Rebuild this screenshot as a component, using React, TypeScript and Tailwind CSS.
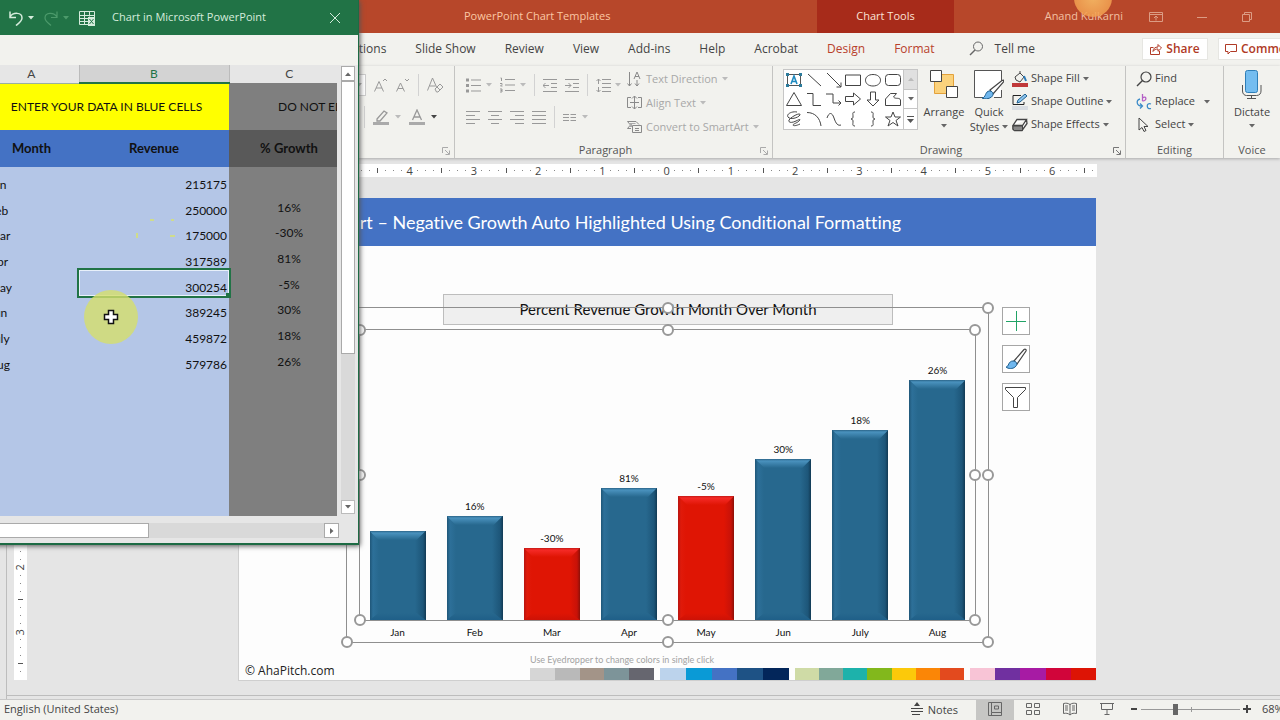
import type { ReactNode } from 'react';

type MonthRow = { month: string; revenue: number; growth: string };

const rows: MonthRow[] = [
  { month: 'Jan', revenue: 215175, growth: '' },
  { month: 'Feb', revenue: 250000, growth: '16%' },
  { month: 'Mar', revenue: 175000, growth: '-30%' },
  { month: 'Apr', revenue: 317589, growth: '81%' },
  { month: 'May', revenue: 300254, growth: '-5%' },
  { month: 'Jun', revenue: 389245, growth: '30%' },
  { month: 'July', revenue: 459872, growth: '18%' },
  { month: 'Aug', revenue: 579786, growth: '26%' },
];

const UNITS_PER_PIXEL = 2415;

function Caret({ className = 'text-[#666]' }: { className?: string }) {
  return (
    <svg width="6" height="4" viewBox="0 0 6 4" className={`shrink-0 ${className}`} aria-hidden="true">
      <path d="M0 0h6L3 3.5z" fill="currentColor" />
    </svg>
  );
}

function Icon({ w = 16, h = 16, children }: { w?: number; h?: number; children: ReactNode }) {
  return (
    <svg
      width={w}
      height={h}
      viewBox={`0 0 ${w} ${h}`}
      fill="none"
      stroke="currentColor"
      className="shrink-0"
      aria-hidden="true"
    >
      {children}
    </svg>
  );
}

function Separator() {
  return <span className="h-[22px] w-px bg-[#d2d2d2]" />;
}

function Launcher({ className }: { className: string }) {
  return (
    <svg width="8" height="8" viewBox="0 0 8 8" fill="none" stroke="currentColor" className={className} aria-hidden="true">
      <path d="M.5 6V.5H6M3 3l4 4M7.500 3.500v4h-4" />
    </svg>
  );
}

/* ---------- PowerPoint title bar and tabs ---------- */

function TitleBar() {
  return (
    <header className="flex h-[33px] shrink-0 overflow-hidden bg-[#b7472a] text-[11px]">
      <div className="flex w-[817px] shrink-0 items-center pl-[464px] text-[#fbc7a4]">PowerPoint Chart Templates</div>
      <div className="flex w-[137px] shrink-0 items-center justify-center bg-[#a72b1a] text-[#fbe3d6]">Chart Tools</div>
      <div className="flex flex-1 items-center justify-end text-[#f2c0a2]">
        <span className="mr-[26px] whitespace-nowrap">Anand Kulkarni</span>
        <div className="flex items-center gap-[33px] pr-[27px] text-[#dc9c84]">
          <button aria-label="Ribbon display options">
            <Icon w={14} h={12}>
              <path d="M.5 1.500h13v9H.5zM.5 3.500h13M7 9.500V5M5 7l2-2 2 2" />
            </Icon>
          </button>
          <button aria-label="Minimize">
            <Icon w={12} h={12}>
              <path d="M1 6.500h10" />
            </Icon>
          </button>
          <button aria-label="Restore">
            <Icon w={12} h={12}>
              <path d="M1.500 3.500h7v7h-7zM3.500 3.500v-2h7v7h-2" />
            </Icon>
          </button>
        </div>
      </div>
    </header>
  );
}

function Tabs() {
  return (
    <nav className="flex h-[33px] shrink-0 items-center overflow-hidden whitespace-nowrap bg-[#f2f2ee] pb-[2px] pl-[323px] text-[12px] text-[#444]">
      <div className="flex gap-[29px]">
        <button>Animations</button>
        <button>Slide Show</button>
        <button>Review</button>
        <button>View</button>
        <button>Add-ins</button>
        <button>Help</button>
        <button>Acrobat</button>
        <button className="text-[#b8402c]">Design</button>
        <button className="text-[#b8402c]">Format</button>
      </div>
      <button className="ml-[34px] flex items-center gap-[11px]">
        <Icon w={15} h={15}>
          <circle cx="9" cy="5.500" r="4.500" stroke="#666" />
          <path d="M6 9l-5 5" stroke="#666" strokeWidth="1.500" />
        </Icon>
        Tell me
      </button>
      <div className="ml-auto flex shrink-0 gap-[10px] font-semibold text-[#b03a26]">
        <button className="flex h-[22px] w-[66px] items-center justify-center gap-[4px] border border-[#e6e6e2] bg-white">
          <Icon w={12} h={12}>
            <path d="M3.500 4.500h-3v7h9V8M3 8.500c0-3 2-4.500 5-4.500V1.500L11.500 5 8 8.300V6C6 6 4 6.500 3 8.500z" />
          </Icon>
          Share
        </button>
        <div className="w-[62px] overflow-hidden">
          <button className="flex h-[22px] w-[100px] items-center gap-[4px] border border-[#e6e6e2] bg-white pl-[6px]">
            <Icon w={12} h={12}>
              <path d="M.5 1.500h11v7h-6L3 11V8.500H.5z" />
            </Icon>
            Comments
          </button>
        </div>
      </div>
    </nav>
  );
}

/* ---------- Ribbon ---------- */

function Group({ className, label, children }: { className: string; label: ReactNode; children: ReactNode }) {
  return (
    <section className={`flex shrink-0 flex-col border-r border-[#c4c4c2] ${className}`}>
      <div className="flex h-[77px]">{children}</div>
      <div className="relative h-[14px] text-center text-[11px] leading-[14px] text-[#555]">{label}</div>
    </section>
  );
}

function FontGroup() {
  return (
    <Group className="w-[455px]" label={<Launcher className="absolute right-[4px] bottom-[2px] text-[#aaa]" />}>
      <div className="ml-auto flex flex-col gap-[10px] pt-[8px] pr-[10px] text-[#999]">
        <div className="flex h-[22px] items-center justify-end gap-[8px]">
          <span className="flex h-[22px] w-[16px] items-center justify-end border border-[#ccc] bg-white pr-[3px]">
            <Caret className="text-[#aaa]" />
          </span>
          <button aria-label="Increase font size">
            <Icon w={14} h={14}>
              <path d="M.5 13.500L5 3.500l4.500 10M2 10h6M9 3l2-2 2 2" />
            </Icon>
          </button>
          <button aria-label="Decrease font size">
            <Icon w={14} h={14}>
              <path d="M.5 13.500L4.500 5l4 8.500M2 10.500h5M9 1l2 2 2-2" />
            </Icon>
          </button>
          <Separator />
          <button aria-label="Clear formatting">
            <Icon w={17} h={16}>
              <path d="M.5 13.500L5.500 1l4 9M2.500 9h6M8 12l5-5 3 3-5 5H9.500zM10 10l3 3" />
            </Icon>
          </button>
        </div>
        <div className="flex h-[22px] items-center gap-[8px] pr-[2px]">
          <Caret className="text-[#bbb]" />
          <Separator />
          <button aria-label="Highlight" className="flex items-center gap-[6px]">
            <Icon w={16} h={16}>
              <path d="M4 10l7-8 3 2-7 8H4z" strokeWidth="1.300" />
              <path d="M0 14.500h16" strokeWidth="3" stroke="#aaa" />
            </Icon>
            <Caret className="text-[#bbb]" />
          </button>
          <button aria-label="Font color" className="flex items-center gap-[6px]">
            <Icon w={16} h={16}>
              <path d="M3.500 11L8 1l4.500 10M5 8h6" strokeWidth="1.300" />
              <path d="M0 14.500h16" strokeWidth="3" stroke="#aaa" />
            </Icon>
            <Caret className="text-[#444]" />
          </button>
        </div>
      </div>
    </Group>
  );
}

const alignments = [
  { name: 'Align left', d: 'M0 1.500h14M0 5.500h9M0 9.500h14M0 13.500h9' },
  { name: 'Center', d: 'M0 1.500h14M3 5.500h8M0 9.500h14M3 13.500h8' },
  { name: 'Align right', d: 'M0 1.500h14M5 5.500h9M0 9.500h14M5 13.500h9' },
  { name: 'Justify', d: 'M0 1.500h14M0 5.500h14M0 9.500h14M0 13.500h14' },
];

function ParagraphGroup() {
  return (
    <Group
      className="w-[318px]"
      label={
        <>
          <span className="pr-[16px]">Paragraph</span>
          <Launcher className="absolute right-[4px] bottom-[2px] text-[#aaa]" />
        </>
      }
    >
      <div className="flex w-[172px] flex-col gap-[10px] pt-[8px] pl-[11px] text-[#999]">
        <div className="flex h-[22px] items-center gap-[8px]">
          <button aria-label="Bullets" className="flex items-center gap-[5px]">
            <Icon w={15} h={15}>
              <path d="M5 2h10M5 7.500h10M5 13h10" />
              <path d="M0 2h3M0 7.500h3M0 13h3" strokeWidth="3" />
            </Icon>
            <Caret className="text-[#bbb]" />
          </button>
          <button aria-label="Numbering" className="flex items-center gap-[5px]">
            <Icon w={15} h={16}>
              <path d="M5 2.500h10M5 8h10M5 13.500h10" />
              <path d="M.5 1h1v3M0 6.500h2v1L.5 9H2.500M0 12h2v3H0M.5 13.500H2" />
            </Icon>
            <Caret className="text-[#bbb]" />
          </button>
          <Separator />
          <button aria-label="Decrease indent">
            <Icon w={14} h={15}>
              <path d="M0 1.500h14M8 5.500h6M8 9.500h6M0 13.500h14M6 7.500H0M2.500 5L0 7.500 2.500 10" />
            </Icon>
          </button>
          <button aria-label="Increase indent">
            <Icon w={14} h={15}>
              <path d="M0 1.500h14M8 5.500h6M8 9.500h6M0 13.500h14M0 7.500h6M3.500 5L6 7.500 3.500 10" />
            </Icon>
          </button>
          <Separator />
          <button aria-label="Line spacing" className="flex items-center gap-[4px]">
            <Icon w={15} h={15}>
              <path d="M6 1.500h9M6 5.500h9M6 9.500h9M6 13.500h9M2.500 1v5M.5 3l2-2 2 2M2.500 9v5M.5 12l2 2 2-2" />
            </Icon>
            <Caret className="text-[#bbb]" />
          </button>
        </div>
        <div className="flex h-[22px] items-center gap-[8px]">
          {alignments.map((item) => (
            <button key={item.name} aria-label={item.name}>
              <Icon w={14} h={15}>
                <path d={item.d} />
              </Icon>
            </button>
          ))}
          <Separator />
          <button aria-label="Columns" className="flex items-center gap-[6px]">
            <Icon w={13} h={9}>
              <path d="M0 1.500h6M0 4.500h6M0 7.500h6M7.500 1.500H13M7.500 4.500H13M7.500 7.500H13" />
            </Icon>
            <Caret className="text-[#bbb]" />
          </button>
        </div>
      </div>
      <div className="flex flex-col pt-px text-[11px] text-[#a8a8a8]">
        <button className="flex h-6 items-center gap-[4px]">
          <Icon w={15} h={16}>
            <path d="M2.500 1v14M.5 12.500l2 2.500 2-2.500M10 9v6M8 12.500l2 2.500 2-2.500M7 8l3-7 3 7M8 5.500h4" stroke="#8a8a8a" />
          </Icon>
          Text Direction
          <Caret className="text-[#bbb]" />
        </button>
        <button className="flex h-6 items-center gap-[4px]">
          <Icon w={15} h={16}>
            <path d="M4 2.500H.5v10H4M11 2.500h3.500v10H11M7.500 1v13M5 3.500L7.500 1 10 3.500M5 11.500L7.500 14 10 11.500M3 7.500h9" stroke="#8a8a8a" />
          </Icon>
          Align Text
          <Caret className="text-[#bbb]" />
        </button>
        <button className="flex h-6 items-center gap-[4px]">
          <Icon w={15} h={14}>
            <path d="M.5 1.500H9l3 3M.5 1.500l3 3.500-3 3.500H4M5.500 5.500h9v7h-9zM8 8.500h4M8 10.500h4" stroke="#8a8a8a" />
            <path d="M2 3h6l1 1H5v3H2l2-2z" fill="#aaa" stroke="none" />
          </Icon>
          Convert to SmartArt
          <Caret className="text-[#bbb]" />
        </button>
      </div>
    </Group>
  );
}

const shapes = [
  { name: 'Line', d: 'M2 2l13 12' },
  { name: 'Arrow', d: 'M1 1l14 14M15 10.500V15h-4.500' },
  { name: 'Rectangle', d: 'M.5 3h15v10.500H.5z' },
  { name: 'Oval', d: 'M8 2.500c10 0 10 11.500 0 11.500S-2 2.500 8 2.500z' },
  { name: 'Rounded rectangle', d: 'M3.500 2.500h9a3 3 0 013 3v5a3 3 0 01-3 3h-9a3 3 0 01-3-3v-5a3 3 0 013-3z' },
  { name: 'Triangle', d: 'M8 1.500l7.500 13H.5z' },
  { name: 'Elbow connector', d: 'M1 2.500h6v12h8' },
  { name: 'Elbow arrow', d: 'M0 3h7v9h8M12.500 9.500L15 12l-2.500 2.500' },
  { name: 'Right arrow', d: 'M.5 5.500h8V2l7 6-7 6v-3.500h-8z' },
  { name: 'Down arrow', d: 'M5.500 1h5v8H14l-6 6-6-6h3.500z' },
  { name: 'Freeform', d: 'M.5 14.500V8l5-5.500h6L8.500 6c2 2.500 6 0 7 3v5.500z' },
  { name: 'Scribble', d: 'M11 1C6 0 0 3 2 6s10 1 12-2c1-3-8 1-11 5-1 3 3 3 7 1s5-2 3 0-6 3-6 4 3 1 7-1' },
  { name: 'Curve', d: 'M1 1.500C9 1.500 14 7 15 15' },
  { name: 'Wave', d: 'M1 7c2-6 5-6 7 0s4 8 7 7' },
  { name: 'Left brace', d: 'M10 1C7 1 8 3 8 5s0 2.500-2 3c2 .5 2 1 2 3s-1 4 2 4' },
  { name: 'Right brace', d: 'M6 1c3 0 2 2 2 4s0 2.500 2 3c-2 .5-2 1-2 3s1 4-2 4' },
  { name: 'Star', d: 'M8 1l2 5h5.500L11 9.500l2 5.500-5-3.500L3 15l2-5.500L.5 6H6z' },
];

function ShapeGallery() {
  return (
    <div className="flex h-[61px] w-[135px] border border-[#c6c6c6] bg-white">
      <div className="grid flex-1 grid-cols-6 place-items-center text-[#444]">
        <button aria-label="Text box">
          <Icon>
            <path d="M1.500 2.500h13v11h-13z" stroke="#555" />
            <path d="M5 12l3-8 3 8M6 9.500h4" stroke="#1f8ac0" strokeWidth="1.600" />
            <path d="M0 2.500h3M13 2.500h3M0 13.500h3M13 13.500h3" stroke="#2b7b9c" strokeWidth="3" />
          </Icon>
        </button>
        {shapes.map((shape) => (
          <button key={shape.name} aria-label={shape.name}>
            <Icon>
              <path d={shape.d} />
            </Icon>
          </button>
        ))}
      </div>
      <div className="grid w-[14px] grid-rows-3 divide-y divide-[#c6c6c6] border-l border-[#c6c6c6] text-[#555]">
        <button aria-label="Scroll up" className="grid place-items-center bg-[#e0e0e0]">
          <Caret className="rotate-180 text-[#bbb]" />
        </button>
        <button aria-label="Scroll down" className="grid place-items-center">
          <Caret />
        </button>
        <button aria-label="More shapes" className="grid place-items-center">
          <Icon w={7} h={7}>
            <path d="M0 .5h7" />
            <path d="M0 3h7L3.500 7z" fill="currentColor" stroke="none" />
          </Icon>
        </button>
      </div>
    </div>
  );
}

function Brush({ w, h }: { w: number; h: number }) {
  return (
    <svg width={w} height={h} viewBox="0 0 22 22" fill="none" aria-hidden="true">
      <path d="M9 13L19 1.500c1.500-1 2.500.5 2 1.500L12 16z" fill="#fff" stroke="#444" strokeWidth="1.200" />
      <path d="M1 19c3 0 2-6 7-6 4 0 5 4 2 6-2 2-7 2-9 0z" fill="#6fb7ee" stroke="#1f5f8f" />
    </svg>
  );
}

function DrawingGroup() {
  return (
    <Group
      className="w-[353px]"
      label={
        <>
          <span className="pr-[16px]">Drawing</span>
          <Launcher className="absolute right-[4px] bottom-[2px] text-[#777]" />
        </>
      }
    >
      <div className="flex w-full gap-[4px] pt-[3px] pl-[10px] text-[11px] text-[#444]">
        <ShapeGallery />
        <button className="flex w-[44px] flex-col items-center leading-[14px]">
          <svg width="28" height="29" viewBox="0 0 28 29" fill="none" aria-hidden="true">
            <path d="M4.500 5.500h19v19h-19z" fill="#fbd27c" stroke="#e3a13a" />
            <path d="M.5 1.500h11v11H.5zM16.500 17.500h11v11h-11z" fill="#fff" stroke="#444" />
          </svg>
          <span className="mt-[7px]">Arrange</span>
          <span className="mt-[5px]">
            <Caret />
          </span>
        </button>
        <button className="flex w-[38px] flex-col items-center leading-[15px]">
          <svg width="30" height="30" viewBox="0 0 30 30" fill="none" aria-hidden="true">
            <path d="M27.500 12V1.500H.5v27h9M27.500 21v7.500H20" stroke="#555" />
            <path d="M1 2h26v26H1z" fill="#fff" />
            <path d="M16 21L28 11.500c2-1 2 0 1.500 1.500L19 25z" fill="#fff" stroke="#444" strokeWidth="1.200" />
            <path d="M8 29c4 0 3-7 7.500-7 4 0 4.500 4 2 6s-7 2.500-9.500 1z" fill="#6fb7ee" stroke="#1f5f8f" />
          </svg>
          <span className="mt-[5px]">Quick</span>
          <span className="flex items-center gap-[3px]">
            Styles
            <Caret />
          </span>
        </button>
        <div className="flex flex-col whitespace-nowrap">
          <button className="flex h-[23px] items-center gap-[3px] pb-[4px]">
            <Icon w={16} h={16}>
              <path d="M3 6l5-4 4 4-4 5-4-2zM8 2V0" />
              <path d="M12 5l2 5" stroke="#2b7bb9" strokeWidth="2" />
              <path d="M0 14h16" stroke="#c0393a" strokeWidth="4" />
            </Icon>
            Shape Fill
            <Caret />
          </button>
          <button className="flex h-[23px] items-center gap-[3px] pb-[4px]">
            <Icon w={16} h={16}>
              <path d="M9 1.500H1v9h11V8" stroke="#222" />
              <path d="M5 9l1-3 7-6 2 2-7 6z" fill="#8cc4ee" stroke="#1f5f8f" />
              <path d="M0 14h16" stroke="#d9dde2" strokeWidth="4" />
            </Icon>
            Shape Outline
            <Caret />
          </button>
          <button className="flex h-[23px] items-center gap-[3px] pb-[4px]">
            <Icon w={16} h={14}>
              <path d="M5 1.500h9.500l-4 6H1zM1 7.500v4l1.500 1H10l5-7-.5-4" fill="#fff" strokeWidth="1.300" />
              <path d="M1 8h9.500v4.500h-8L1 11z" fill="#888" />
            </Icon>
            Shape Effects
            <Caret />
          </button>
        </div>
      </div>
    </Group>
  );
}

function EditingGroup() {
  return (
    <Group className="w-[98px]" label="Editing">
      <div className="flex flex-col pt-[3px] pl-[10px] text-[11px] text-[#444]">
        <button className="flex h-[23px] items-center gap-[3px] pb-[4px]">
          <Icon w={16} h={16}>
            <circle cx="10" cy="6" r="5" strokeWidth="1.200" />
            <path d="M6.500 9.500L1 15" strokeWidth="1.500" />
          </Icon>
          Find
        </button>
        <button className="flex h-[23px] items-center gap-[3px] pb-[4px]">
          <Icon w={16} h={16}>
            <path d="M6.500 0v7M6.500 4c4-3 5 3 0 3" stroke="#b45fc6" strokeWidth="1.300" />
            <path d="M15 10c-5-2-5 6 0 4.500M4 5C0 6 0 12 6 12M4 9.500L6.500 12 4 14.500" stroke="#3b8bc8" strokeWidth="1.300" />
          </Icon>
          Replace
          <span className="ml-[6px]">
            <Caret />
          </span>
        </button>
        <button className="flex h-[23px] items-center gap-[3px] pb-[4px]">
          <Icon w={16} h={16}>
            <path d="M3 1v12l3-2.500 2 4 2-1-2-4h4z" />
          </Icon>
          Select
          <Caret />
        </button>
      </div>
    </Group>
  );
}

function Ribbon() {
  return (
    <div className="z-10 flex h-[92px] shrink-0 overflow-hidden bg-[#f2f2ee] shadow-[0_1px_3px_#aaa]">
      <FontGroup />
      <ParagraphGroup />
      <DrawingGroup />
      <EditingGroup />
      <Group className="w-[56px] border-r-0" label="Voice">
        <button className="flex w-full flex-col items-center pt-[4px] text-[11px] leading-[14px] text-[#444]">
          <svg width="20" height="29" viewBox="0 0 20 29" fill="none" aria-hidden="true">
            <rect x="3.500" y=".5" width="12" height="22" rx="2" fill="#74bdf0" stroke="#2f7fb8" />
            <path d="M.5 15v6c0 3 2 4.500 4 4.500h10c3 0 4.500-2 4.500-4.500v-6M9.500 25.500v3M5 28.500h9" stroke="#555" />
          </svg>
          <span className="mt-[6px]">Dictate</span>
          <span className="mt-[5px]">
            <Caret />
          </span>
        </button>
      </Group>
    </div>
  );
}

/* ---------- Rulers ---------- */

function marks(reach: number) {
  return Array.from({ length: reach * 2 + 1 }, (_, i) => i - reach);
}

function Mark({ eighth, vertical = false }: { eighth: number; vertical?: boolean }) {
  if (eighth % 8 === 0) {
    return <span className={vertical ? '-rotate-90' : ''}>{Math.abs(eighth) / 8}</span>;
  }
  if (eighth % 4 === 0) {
    return <span className={vertical ? 'h-px w-[5px] bg-[#555]' : 'h-[5px] w-px bg-[#555]'} />;
  }
  return <span className="size-px bg-[#888]" />;
}

function HorizontalRuler() {
  return (
    <div className="-mx-px flex h-[13px] bg-white text-[11px] leading-[13px] text-[#444]">
      {marks(53).map((eighth) => (
        <span key={eighth} className="flex w-0 flex-1 items-center justify-center">
          <Mark eighth={eighth} />
        </span>
      ))}
    </div>
  );
}

function VerticalRuler() {
  return (
    <div className="mt-[41px] mb-[15px] ml-[7px] flex w-[13px] shrink-0 flex-col bg-white py-[4px] text-[11px] text-[#444]">
      {marks(29).map((eighth) => (
        <span key={eighth} className="flex h-0 flex-1 items-center justify-center">
          <Mark eighth={eighth} vertical />
        </span>
      ))}
    </div>
  );
}

/* ---------- Slide ---------- */

function Bar({ row }: { row: MonthRow }) {
  const negative = row.growth.startsWith('-');
  const body = negative
    ? 'bg-[linear-gradient(90deg,#b81410,#e01a0a_3px,#df1504_8px,#df1504_46px,#c81208_53px,#8c1008)]'
    : 'bg-[linear-gradient(90deg,#1f5678,#2d7099_3px,#27688e_9px,#27688e_45px,#1d5679_53px,#123a54)]';
  const top = negative
    ? 'bg-[linear-gradient(#c41a16,#f52a26_2px,#df1504)]'
    : 'bg-[linear-gradient(#2b6488,#4a92be_2px,#27688e)]';
  const bottom = negative ? 'bg-[linear-gradient(#df1504,#cd1206)]' : 'bg-[linear-gradient(#27688e,#1f5f88)]';
  return (
    <div
      className={`flex w-[56px] flex-col justify-between ${body}`}
      style={{ height: Math.round(row.revenue / UNITS_PER_PIXEL) }}
    >
      <div className={`h-[9px] [clip-path:polygon(0_0,100%_0,47px_100%,9px_100%)] ${top}`} />
      <div className={`h-[7px] [clip-path:polygon(9px_0,47px_0,100%_100%,0_100%)] ${bottom}`} />
    </div>
  );
}

function Frame({ className, handles }: { className: string; handles: string[] }) {
  return (
    <div className={`pointer-events-none absolute border border-[#8f8f8f] ${className}`}>
      {handles.map((place) => (
        <span key={place} className={`absolute size-[12px] rounded-full border-2 border-[#989898] bg-white ${place}`} />
      ))}
    </div>
  );
}

const handlePlaces = [
  '-top-[6px] -left-[6px]',
  '-top-[6px] left-[calc(50%-6px)]',
  '-top-[6px] -right-[6px]',
  'top-[calc(50%-6px)] -left-[6px]',
  'top-[calc(50%-6px)] -right-[6px]',
  '-bottom-[6px] -left-[6px]',
  '-bottom-[6px] left-[calc(50%-6px)]',
  '-bottom-[6px] -right-[6px]',
];

function Chart() {
  return (
    <div className="relative mx-[107px] mt-[61px] h-[336px] px-[13px] pt-[22px] text-[10px] text-[#111]">
      <h2 className="absolute -top-[13px] left-[97px] flex h-[31px] w-[450px] items-center justify-center border border-[#bdbdbd] bg-[#efefef] text-[15px]">
        Percent Revenue Growth Month Over Month
      </h2>
      <div className="relative grid h-[291px] grid-cols-8 items-end">
        {rows.map((row) => (
          <div key={row.month} className="flex flex-col items-center gap-[4px]">
            <span className="leading-[12px]">{row.growth}</span>
            <Bar row={row} />
          </div>
        ))}
        <Frame className="inset-x-0 top-0 -bottom-px" handles={handlePlaces} />
      </div>
      <div className="grid grid-cols-8 pt-[6px] text-center leading-[12px]">
        {rows.map((row) => (
          <span key={row.month}>{row.month}</span>
        ))}
      </div>
      <Frame className="inset-0" handles={handlePlaces} />
      <div className="absolute top-0 left-full ml-[13px] flex flex-col gap-[10px]">
        <button aria-label="Chart elements" className="grid size-[28px] place-items-center border border-[#a6a6a6] bg-white">
          <Icon w={20} h={20}>
            <path d="M0 10.500h20M10.500 0v20" stroke="#21a366" />
          </Icon>
        </button>
        <button aria-label="Chart styles" className="grid size-[28px] place-items-center border border-[#a6a6a6] bg-white">
          <Brush w={22} h={22} />
        </button>
        <button aria-label="Chart filters" className="grid size-[28px] place-items-center border border-[#a6a6a6] bg-white">
          <Icon w={22} h={22}>
            <path d="M.5 1.500h20v2l-8 8v10h-4v-10l-8-8z" stroke="#444" />
          </Icon>
        </button>
      </div>
    </div>
  );
}

const swatches = [
  { width: 'w-[124px]', colors: ['bg-[#d6d6d6]', 'bg-[#b9b9b9]', 'bg-[#a39488]', 'bg-[#7d9499]', 'bg-[#66666f]'] },
  { width: 'w-[129px]', colors: ['bg-[#bcd3ec]', 'bg-[#0a9ad6]', 'bg-[#4472c4]', 'bg-[#1e5285]', 'bg-[#03265a]'] },
  {
    width: 'w-[169px]',
    colors: [
      'bg-[#cfdba6]',
      'bg-[#81a899]',
      'bg-[#1db2ab]',
      'bg-[#82b81c]',
      'bg-[#fcc90a]',
      'bg-[#fb8606]',
      'bg-[#e34a1e]',
    ],
  },
  { width: 'w-[126px]', colors: ['bg-[#f8c4d6]', 'bg-[#7030a0]', 'bg-[#a71ba4]', 'bg-[#d1053a]', 'bg-[#dd1405]'] },
];

function Slide() {
  return (
    <article className="mt-[21px] border-b border-l border-[#cfcfcf] bg-[#fdfdfd] font-['Lato',sans-serif] [font-variant-ligatures:none]">
      <h1 className="flex h-[48px] items-center bg-[#4472c4] pl-[24px] text-[18px] whitespace-nowrap text-white">
        Column Chart – Negative Growth Auto Highlighted Using Conditional Formatting
      </h1>
      <Chart />
      <div className="mt-[11px] flex items-end justify-between pl-[6px]">
        <span className="font-['Open_Sans',sans-serif] text-[12px] leading-[18px] text-[#222]">© AhaPitch.com</span>
        <div className="text-[9px] leading-[12px] text-[#a3a3a3]">
          <p>Use Eyedropper to change colors in single click</p>
          <div className="mt-[2px] flex h-[12px] gap-[6px]">
            {swatches.map((group) => (
              <div key={group.width} className={`flex ${group.width}`}>
                {group.colors.map((color) => (
                  <span key={color} className={`flex-1 ${color}`} />
                ))}
              </div>
            ))}
          </div>
        </div>
      </div>
    </article>
  );
}

/* ---------- Status bar ---------- */

function StatusBar() {
  return (
    <footer className="flex h-[21px] shrink-0 items-start overflow-hidden whitespace-nowrap border-t border-[#c8c8c8] bg-[#f2f2ee] pl-[4px] text-[11px] leading-[17px] text-[#444]">
      <span>English (United States)</span>
      <button className="ml-auto flex h-[18px] items-center gap-[5px]">
        <Icon w={12} h={14}>
          <path d="M0 6.500h12M0 9.500h12M1 12.500h8" />
          <path d="M3 4l3-4 3 4z" fill="currentColor" stroke="none" />
        </Icon>
        Notes
      </button>
      <div className="ml-[18px] flex h-[20px] text-[#666]">
        <button aria-label="Normal view" className="grid w-[38px] place-items-center bg-[#c6c6c4] pb-[2px]">
          <Icon w={14} h={14}>
            <path d="M.5.5h13v13H.5zM3.500.5v10H13.500M3.500 10.500v3M6.500 4h4v3h-4z" />
          </Icon>
        </button>
        <button aria-label="Slide sorter" className="grid w-[38px] place-items-center pb-[2px]">
          <Icon w={14} h={14}>
            <path d="M.5 1.500h5v4h-5zM8.500 1.500h5v4h-5zM.5 8.500h5v4h-5zM8.500 8.500h5v4h-5z" />
          </Icon>
        </button>
        <button aria-label="Reading view" className="grid w-[36px] place-items-center pb-[2px]">
          <Icon w={14} h={14}>
            <path d="M.5 1.500C3 1 5 1 7 2.500 9 1 11 1 13.500 1.500v10C11 11 9 11 7 13 5 11 3 11 .5 11.500zM7 2v11M2 4h3M2 6h3M2 8h3M9 4h3M9 6h3M9 8h3" />
          </Icon>
        </button>
        <button aria-label="Slide show" className="grid w-[38px] place-items-center pb-[2px]">
          <Icon w={14} h={14}>
            <path d="M0 1.500h14M1.500 2v5.500h11V2M7 7.500v5M4.500 12.500h5" />
          </Icon>
        </button>
      </div>
      <div className="ml-[4px] flex h-[18px] items-center gap-[3px]">
        <button aria-label="Zoom out">
          <Icon w={8} h={8}>
            <path d="M1 4h6" strokeWidth="2" />
          </Icon>
        </button>
        <div className="relative flex items-center">
          <input
            type="range"
            aria-label="Zoom"
            min="10"
            max="155"
            defaultValue="59"
            className="h-[12px] w-[99px] appearance-none bg-[linear-gradient(#999,#999)] bg-[length:100%_1px] bg-center bg-no-repeat [&::-webkit-slider-thumb]:h-[11px] [&::-webkit-slider-thumb]:w-[5px] [&::-webkit-slider-thumb]:appearance-none [&::-webkit-slider-thumb]:bg-[#666]"
          />
          <span className="absolute top-[4px] left-1/2 h-[5px] w-px bg-[#999]" />
        </div>
        <button aria-label="Zoom in">
          <Icon w={8} h={8}>
            <path d="M0 4h8M4 0v8" strokeWidth="2" />
          </Icon>
        </button>
      </div>
      <span className="ml-[11px] w-[18px]">68%</span>
    </footer>
  );
}

/* ---------- Excel data window ---------- */

function DataTable() {
  return (
    <div className="h-[451px] w-[353px] overflow-hidden bg-[#7f7f7f]">
      <table className="w-[365px] table-fixed border-collapse bg-[linear-gradient(90deg,#b4c6e7_245px,#7f7f7f_245px)] font-['Lato',sans-serif] text-[12px] text-[#111]">
        <colgroup>
          <col className="w-[95px]" />
          <col className="w-[150px]" />
          <col className="w-[120px]" />
        </colgroup>
        <thead>
          <tr className="h-[18px] bg-[#e6e6e6] leading-[16px] text-[#444]">
            <th className="border-b border-[#9ab0a0] p-0 font-normal">A</th>
            <th className="border-x border-b-2 border-x-[#bbb] border-b-[#217346] bg-[#d3d3d3] p-0 font-normal text-[#217346]">
              B
            </th>
            <th className="p-0 font-normal">C</th>
          </tr>
        </thead>
        <tbody>
          <tr className="h-[47px]">
            <td colSpan={2} className="bg-[#ffff00] p-0 text-center">
              ENTER YOUR DATA IN BLUE CELLS
            </td>
            <td className="p-0 pl-[49px] whitespace-nowrap">DO NOT EDIT</td>
          </tr>
          <tr className="h-[37px] text-[13px]">
            <th className="bg-[#4472c4] p-0">Month</th>
            <th className="bg-[#4472c4] p-0">Revenue</th>
            <th className="bg-[#595959] p-0">% Growth</th>
          </tr>
          {rows.map((row) => (
            <tr key={row.month} className="h-[26px] leading-[16px] [&:nth-child(3n+2)]:h-[25px]">
              <td className="p-0 pl-[5px] align-bottom">{row.month}</td>
              <td
                className={
                  row.month === 'May'
                    ? 'relative p-0 pr-[2px] text-right align-bottom shadow-[inset_0_0_0_1px_#e8f0fa] outline-2 outline-[#217346]'
                    : 'p-0 pr-[2px] text-right align-bottom'
                }
              >
                {row.revenue}
                {row.month === 'May' && <span className="absolute -right-[2px] -bottom-[2px] size-[5px] bg-[#217346]" />}
              </td>
              <td className="p-0 pb-[3px] text-center align-bottom">{row.growth}</td>
            </tr>
          ))}
          <tr className="h-[143px]">
            <td colSpan={3} />
          </tr>
        </tbody>
      </table>
    </div>
  );
}

function ExcelWindow() {
  return (
    <section className="absolute top-0 -left-4 z-20 flex h-[545px] w-[375px] flex-col border-r border-b-2 border-[#1d6b44] bg-[#e6e6e6] shadow-[1px_1px_5px_#555]">
      <div className="flex h-[35px] shrink-0 items-center bg-[#217346] pl-[24px] text-[11px] text-[#d5ecdc]">
        <button aria-label="Undo" className="flex items-center gap-[4px]">
          <Icon w={16} h={16}>
            <path d="M2 1.500v6h6M2 7c3-5 12-5 12 1 0 3-3 5-6 7.500" strokeWidth="1.500" />
          </Icon>
          <Caret className="text-[#d5ecdc]" />
        </button>
        <button aria-label="Redo" className="ml-[9px] flex items-center gap-[4px] text-[#4c9a6b]">
          <Icon w={16} h={16}>
            <path d="M14 1.500v6H8M14 7c-3-5-12-5-12 1 0 3 3 5 6 7.500" strokeWidth="1.200" />
          </Icon>
          <Caret className="text-[#4c9a6b]" />
        </button>
        <button aria-label="Edit data in Excel" className="ml-[10px]">
          <Icon w={16} h={16}>
            <path d="M.5 1.500h15v13H.5zM.5 5.500h15M.5 8.500h9M.5 11.500h9M5.500 1.500v13M10.500 1.500v5" />
            <path d="M9 7h7v9H9z" fill="#d5ecdc" stroke="none" />
            <path d="M10.500 9l4 5M14.500 9l-4 5" stroke="#217346" />
          </Icon>
        </button>
        <span className="ml-[17px] flex-1 whitespace-nowrap">Chart in Microsoft PowerPoint</span>
        <button aria-label="Close" className="mr-[18px]">
          <Icon w={10} h={10}>
            <path d="M0 0l10 10M10 0L0 10" />
          </Icon>
        </button>
      </div>
      <div className="h-[30px] shrink-0 bg-[#f2f2ee]" />
      <div className="flex h-[451px] shrink-0">
        <DataTable />
        <div className="mt-px mb-[2px] ml-[4px] flex w-[14px] flex-col bg-[#d9d9d9]">
          <button aria-label="Scroll up" className="grid h-[15px] place-items-center border border-[#aaa] bg-white">
            <Caret className="rotate-180 text-[#666]" />
          </button>
          <div className="h-[273px] border border-[#aaa] bg-white" />
          <button aria-label="Scroll down" className="mt-auto grid h-[14px] place-items-center border border-[#bbb] bg-white">
            <Caret />
          </button>
        </div>
      </div>
      <div className="mt-[7px] mr-[19px] flex h-[15px] bg-[#d9d9d9]">
        <div className="w-[165px] border border-[#aaa] bg-white" />
        <button aria-label="Scroll right" className="ml-auto grid w-[15px] place-items-center border border-[#aaa] bg-white">
          <Caret className="-rotate-90 text-[#666]" />
        </button>
      </div>
    </section>
  );
}

function Pointer() {
  return (
    <>
      <svg width="40" height="20" viewBox="0 0 40 20" className="pointer-events-none absolute top-[218px] left-[135px] z-30" aria-hidden="true">
        <path d="M15 2h4M36 2h3M2 15v5M35 18h5" stroke="#cfdc8c" strokeWidth="2" />
      </svg>
      <div className="pointer-events-none absolute top-[290px] left-[84px] z-30 grid size-[54px] place-items-center rounded-full bg-[#d6de6c]/80">
        <svg width="16" height="16" viewBox="0 0 16 16" aria-hidden="true">
          <path d="M5.500 1.500h5v4h4v5h-4v4h-5v-4h-4v-5h4z" fill="#fff" stroke="#111" strokeWidth="1.500" />
        </svg>
      </div>
    </>
  );
}

export default function App() {
  return (
    <div className="relative flex min-h-screen flex-col overflow-hidden bg-[#e5e5e5] font-['Open_Sans',sans-serif]">
      <TitleBar />
      <Tabs />
      <Ribbon />
      <main className="flex flex-1">
        <div className="w-[7px] shrink-0 border-r border-[#bdbdbd]" />
        <div className="mb-[3px] flex flex-1 border-b border-[#bdbdbd]">
          <VerticalRuler />
          <div className="min-w-0 flex-1 pt-[6px] pr-[184px] pl-[211px]">
            <HorizontalRuler />
            <Slide />
          </div>
        </div>
      </main>
      <StatusBar />
      <ExcelWindow />
      <Pointer />
      <div className="pointer-events-none absolute -top-[21px] right-[168px] size-[38px] rounded-full bg-[radial-gradient(#fbc36a,#ee9045)] opacity-85" />
    </div>
  );
}
